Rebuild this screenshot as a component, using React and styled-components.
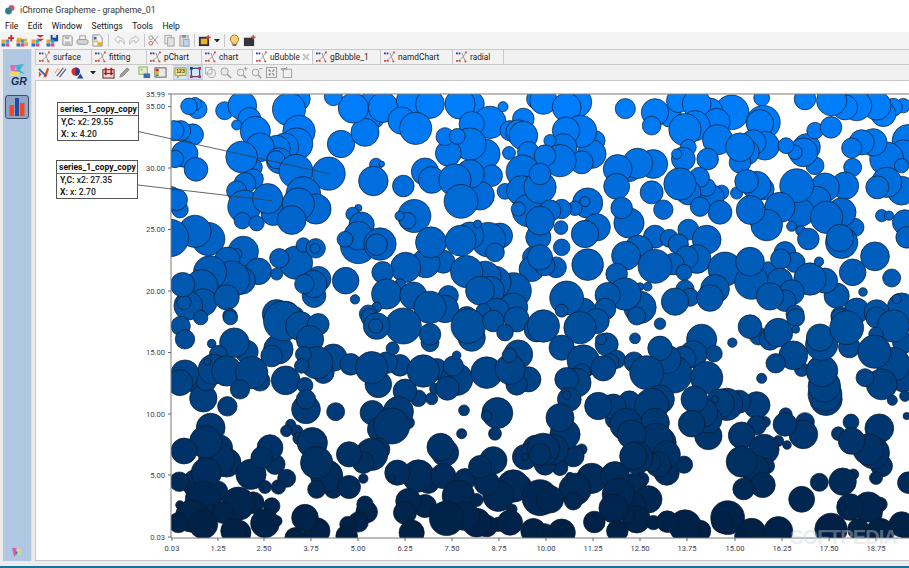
import React from "react";
import styled, { createGlobalStyle } from "styled-components";

const Global = createGlobalStyle`
  html, body { margin: 0; padding: 0; width: 909px; height: 568px; overflow: hidden; background: #fff; }
  * { box-sizing: border-box; }
`;

const FONT = `Roboto, "Noto Sans", "Liberation Sans", sans-serif`;

const Page = styled.div`
  width: 909px; height: 568px; display: flex; flex-direction: column;
  background: #f0f0f0; font-family: ${FONT}; font-size: 8.5px; color: #222; overflow: hidden;
`;
const TitleBar = styled.div`
  height: 18px; flex: none; background: #fff; display: flex; align-items: center; padding: 2px 0 0 5px; gap: 5px;
`;
const TitleText = styled.span` font-size: 8.8px; color: #333; `;
const MenuBar = styled.div`
  height: 14px; flex: none; background: #fff; display: flex; align-items: center; padding: 1px 0 0 5px; gap: 9.5px;
`;
const MenuItem = styled.span` font-size: 8.5px; color: #111; `;
const MainToolbar = styled.div`
  height: 17px; flex: none; display: flex; align-items: center; background: #f4f4f4;
`;
const ToolBtn = styled.div`
  flex: none; width: ${p => p.$w || 15}px; height: 15px; display: flex; align-items: center; justify-content: center;
  margin-right: ${p => p.$mr || 0}px;
  background: ${p => (p.$on ? "#d4e7f7" : "transparent")};
  outline: ${p => (p.$on ? "1px solid #b4d3ec" : "none")};
  outline-offset: -1px;
`;
const Sep = styled.div`
  flex: none; width: 1px; height: 13px; background: #c8c8c8; margin: 0 ${p => p.$m || 2}px;
`;
const Workspace = styled.div`
  flex: 1; display: flex; min-height: 0; padding: 0 0 5px 3px; background: #ececec;
`;
const SideRail = styled.div`
  width: 29px; flex: none; background: #b0c8e2; border-right: 1px solid #d7e1ec; display: flex; flex-direction: column; align-items: center;
  padding-top: 14px; margin-right: 3px;
`;
const RailLogo = styled.div`
  width: 22px; height: 24px; position: relative; display: flex; align-items: flex-end; justify-content: center;
`;
const RailLogoText = styled.span`
  position: absolute; bottom: 0; left: 5px; font: italic 700 10.5px "Liberation Sans", sans-serif; color: #1c2c5c;
`;
const RailButton = styled.div`
  margin-top: 8px; width: 24px; height: 24px; border: 1px solid #3f4e66; border-radius: 3px; background: #8ea6c4;
  display: flex; align-items: center; justify-content: center;
`;
const RailFoot = styled.div` margin-top: auto; margin-bottom: 3px; height: 10px; `;
const Content = styled.div`
  flex: 1; min-width: 0; display: flex; flex-direction: column;
`;
const TabStrip = styled.div`
  height: 16px; flex: none; display: flex; background: #f0f0f0; border-top: 1px solid #c8c8c8; border-bottom: 1px solid #c8c8c8;
`;
const Tab = styled.div`
  flex: none; width: ${p => p.$w}px; display: flex; align-items: center; gap: 2px; padding-left: 2px;
  background: ${p => (p.$active ? "#fff" : "#f2f2f2")}; border-left: 1px solid #c9c9c9; border-right: 1px solid #c9c9c9;
  margin-right: -1px;
`;
const TabLabel = styled.span` font-size: 8.3px; color: #222; white-space: nowrap; `;
const TabClose = styled.span` margin-left: auto; margin-right: 2px; display: flex; `;
const ChartToolbar = styled.div`
  height: 16px; flex: none; display: flex; align-items: center; padding-left: 1px; background: #f0f0f0; border-bottom: 1px solid #c8c8c8;
`;
const ChartPane = styled.div`
  flex: 1; position: relative; min-height: 0; background: #fff; border-left: 1px solid #c6c6c6; border-bottom: 1px solid #c6c6c6; margin-left: 0; overflow: hidden;
`;
const ChartSvg = styled.svg` display: block; position: absolute; left: 0; top: 0; `;
const Callout = styled.div`
  position: absolute; left: ${p => p.$x}px; top: ${p => p.$y}px; width: 82px; height: 39px;
  background: #fff; border: 1px solid #555; display: flex; flex-direction: column;
`;
const CalloutHead = styled.div`
  height: 13px; flex: none; border-bottom: 1px solid #666; padding-left: 2px; font-size: 8.6px; font-weight: 700; line-height: 12px; color: #111; white-space: nowrap;
`;
const CalloutRow = styled.div`
  height: 11.5px; padding-left: 3px; font-size: 8.6px; font-weight: 500; line-height: 12px; color: #222; white-space: nowrap;
  & b { font-weight: 700; }
`;
const Watermark = styled.div`
  position: absolute; left: 754px; top: 447px; font: 700 20px/18px "Liberation Sans", sans-serif; letter-spacing: -0.8px;
  color: rgba(205,210,215,.42); white-space: nowrap; pointer-events: none;
`;
const BottomLine = styled.div` height: 2px; flex: none; background: #17749c; `;

/* ---------- icons ---------- */
const S = ({ children, size = 13 }) => (
  <svg width={size} height={size} viewBox="0 0 14 14" fill="none">{children}</svg>
);
const Dots = () => (
  <>
    <rect x="0.5" y="6" width="4" height="3.5" fill="#e8a030" />
    <rect x="0.5" y="10" width="4" height="3.5" fill="#2a73c4" />
    <rect x="5" y="10" width="4" height="3.5" fill="#d94a8c" />
    <rect x="5" y="6" width="4" height="3.5" fill="#35a0c8" />
  </>
);
const icons = {
  new: <><Dots /><path d="M11 1v7M7.5 4.5h7" stroke="#d8262c" strokeWidth="2" /></>,
  open: <><path d="M1 4h4l1 1h6v3H1z" fill="#f0b030" /><Dots /><rect x="9" y="9" width="4" height="4" fill="#f0a040" /></>,
  hier: <><path d="M6 1h8l-4 3zM6 5h8l-4 3z" fill="#d8262c" /><Dots /></>,
  save: <><path d="M5 1h8v7H5z" fill="#1c4aa0" /><rect x="7" y="1" width="4" height="3" fill="#d6e4f6" /><Dots /></>,
  saveg: <><path d="M2 2h9l1 1v9H2z" stroke="#8b8b8b" /><rect x="4" y="2.5" width="5" height="3" fill="#b5b5b5" /><rect x="4" y="8" width="6" height="4" fill="#bdbdbd" /></>,
  print: <><rect x="1" y="6" width="12" height="5" rx="2" fill="#d6d6d6" stroke="#8f8f8f" /><rect x="4" y="2" width="6" height="4" fill="#f4f4f4" stroke="#9b9b9b" /></>,
  prev: <><path d="M2 1h7l3 3v9H2z" fill="#f7f7f7" stroke="#8a8a8a" /><rect x="3" y="3" width="3" height="3" fill="#2a73c4" /><rect x="3" y="7" width="5" height="2" fill="#e8c030" /><rect x="7" y="9" width="5" height="4" fill="#d8b020" /></>,
  undo: <path d="M2 6l4-4 1 2c4 0 6 3 5 7-1-3-3-4-5-4l-1 3z" stroke="#b4b4b4" />,
  redo: <path d="M12 6L8 2 7 4C3 4 1 7 2 11c1-3 3-4 5-4l1 3z" stroke="#b4b4b4" />,
  cut: <><path d="M4 2l7 9M11 2L4 11" stroke="#9e9e9e" /><circle cx="3" cy="10" r="2" stroke="#d06060" /><circle cx="3" cy="4" r="2" stroke="#9e9e9e" /></>,
  copy: <><rect x="2" y="1.5" width="7" height="9" fill="#ececec" stroke="#a2a2a2" /><rect x="5" y="4" width="7" height="9" fill="#e2e2e2" stroke="#a2a2a2" /></>,
  paste: <><rect x="2" y="2" width="9" height="11" fill="#d8d8d8" stroke="#a0a0a0" /><rect x="4.5" y="1" width="4" height="3" fill="#8c8c8c" /><rect x="6" y="6" width="6" height="7" fill="#bcd4ee" stroke="#8daac8" /></>,
  box: <><rect x="1" y="3" width="11" height="10" fill="#2f3036" /><rect x="3" y="5" width="7" height="6" fill="#f0b21e" /><path d="M11 1v5M8.5 3.5h5" stroke="#d8402c" strokeWidth="1.4" /></>,
  bulb: <><path d="M7 1a4.5 4.5 0 0 1 2.5 8.2V11h-5V9.2A4.5 4.5 0 0 1 7 1z" fill="#f5d27a" stroke="#b5701c" /><rect x="5" y="11" width="4" height="2" fill="#6c6c70" /></>,
  cam: <><rect x="1" y="4" width="11" height="9" fill="#34353b" /><path d="M11 1v5M8.5 3.5h5" stroke="#d8402c" strokeWidth="1.4" /></>,
  pencils: <><path d="M2 12V6l3 3zM7 12L11 2l2 1-3 9z" fill="#d8552a" /><path d="M2 3l8 8" stroke="#2f66b8" strokeWidth="2" /></>,
  wand: <><path d="M3 11L10 2M6 12l7-9" stroke="#5c5c8c" strokeWidth="1.3" /><path d="M1 8l3-5 2 1" stroke="#e0a030" /></>,
  series: <><circle cx="5" cy="6" r="4.5" fill="#d92828" /><path d="M5 1.5a4.5 4.5 0 0 1 0 9z" fill="#1c3c9c" /><path d="M10 8l3.5 5.5h-7z" fill="#1c4aa0" /></>,
  cal: <><rect x="1" y="4" width="12" height="9" fill="#f0d8d8" stroke="#4a2020" /><path d="M4 2v8M10 2v8" stroke="#c81818" strokeWidth="2" /><path d="M2 8h10" stroke="#701818" /></>,
  pen: <><path d="M2 12l1-3 7-7 2 2-7 7z" fill="#9c9c9c" stroke="#888" /></>,
  data: <><rect x="1" y="1" width="9" height="8" fill="#dfe9d0" stroke="#8aa870" /><path d="M3 3h2v2H3z" fill="#e0b020" /><rect x="6" y="8" width="7" height="5" fill="#3c6cb4" /></>,
  heat: <><rect x="1" y="2" width="12" height="10" fill="#e8e8e8" stroke="#5c5c5c" /><rect x="2" y="3" width="3" height="3" fill="#d82020" /><rect x="2" y="6" width="3" height="3" fill="#e8b020" /><rect x="2" y="9" width="3" height="2" fill="#3ca030" /></>,
  label: <><path d="M1 2h12v8H6l-2 3v-3H1z" fill="#f2e58a" stroke="#a09030" /><text x="7" y="8" textAnchor="middle" fontSize="5.5" fontWeight="700" fill="#444" fontFamily="Liberation Sans">123</text></>,
  zoomSel: <><rect x="2.5" y="2.5" width="9" height="9" stroke="#1c3c7c" strokeWidth="1.2" /><rect x="1" y="10" width="3" height="3" fill="#d83030" /><rect x="10" y="1" width="3" height="3" fill="#d83030" /><rect x="10" y="10" width="3" height="3" fill="#d83030" /><rect x="1" y="1" width="3" height="3" fill="#1c3c7c" /></>,
  rot: <><rect x="1.5" y="1.5" width="7" height="7" stroke="#a8a8a8" /><circle cx="8" cy="8" r="4.5" stroke="#a8a8a8" /></>,
  zoom: <><circle cx="6" cy="6" r="4" fill="#e8e8e8" stroke="#9a9a9a" /><path d="M9 9l4 4" stroke="#9a9a9a" strokeWidth="1.6" /></>,
  zoomIn: <><circle cx="6" cy="7" r="3.6" stroke="#9a9a9a" /><path d="M9 10l3 3" stroke="#9a9a9a" strokeWidth="1.6" /><path d="M11.5 1v4M9.5 3h4" stroke="#9a9a9a" /></>,
  zoomOut: <><circle cx="6" cy="7" r="3.6" stroke="#9a9a9a" /><path d="M9 10l3 3" stroke="#9a9a9a" strokeWidth="1.6" /><path d="M9.5 3h4" stroke="#9a9a9a" /></>,
  fit: <><rect x="1.5" y="1.5" width="11" height="11" fill="#ececec" stroke="#9a9a9a" /><path d="M4 4l2 2M10 4L8 6M4 10l2-2M10 10L8 8" stroke="#777" strokeWidth="1.2" /></>,
  reset: <><rect x="3.5" y="3.5" width="9" height="9" stroke="#a0a0a0" /><path d="M1 3h6V1M1 3l2 2" stroke="#8c8c8c" /></>,
};
const Icon = ({ name }) => <S>{icons[name]}</S>;
const Drop = () => (
  <svg width="6" height="3.5" viewBox="0 0 7 4"><path d="M0 0h7L3.5 4z" fill="#222" /></svg>
);
const TabGlyph = () => (
  <svg width="13" height="12" viewBox="0 0 13 12" fill="none">
    <path d="M3 10l5-4 3-5" stroke="#a9a9a9" strokeWidth="1" />
    <path d="M7 2l3 8" stroke="#9a9a9a" strokeWidth="1" />
    <rect x="1" y="1.5" width="1.8" height="1.8" fill="#2c3f96" /><rect x="3.6" y="1.5" width="1.8" height="1.8" fill="#2c3f96" />
    <rect x="1" y="9" width="1.8" height="1.8" fill="#df4a2c" /><rect x="3.8" y="9" width="1.8" height="1.8" fill="#df4a2c" />
    <rect x="10" y="0.5" width="1.8" height="1.8" fill="#df4a2c" /><rect x="9.5" y="9.5" width="1.8" height="1.8" fill="#df4a2c" />
  </svg>
);
const CloseGlyph = () => (
  <svg width="8" height="8" viewBox="0 0 8 8" fill="none"><path d="M1 1l6 6M7 1L1 7" stroke="#9c9c9c" strokeWidth="1.6" /><path d="M1 1l6 6M7 1L1 7" stroke="#fff" strokeWidth=".5" /></svg>
);

/* ---------- bubble data: [x, y, r] per 3x quadrant crop ---------- */
const Q1 = [[82,45,27],[75,30,18],[57,37,23],[164,50,25],[217,35,40],[238,75,32],[200,93,14],[256,112,42],[385,15,33],[357,46,46],[387,112,45],[380,150,45],[345,158,38],[320,165,38],[270,160,40],[250,220,25],[215,189,44],[328,200,36],[318,197,25],[378,232,47],[476,239,46],[68,122,30],[32,110,28],[12,110,28],[44,180,37],[15,195,24],[78,226,33],[250,255,28],[225,268,30],[200,291,28],[223,338,46],[310,358,34],[293,314,42],[400,300,48],[438,345,42],[385,330,45],[365,378,40],[217,380,23],[260,388,21],[0,315,35],[30,347,23],[20,317,30],[513,150,38],[595,30,30],[615,75,25],[600,80,28],[640,40,42],[585,115,39],[550,42,42],[720,20,38],[780,30,40],[695,80,38],[737,103,45],[905,30,35],[870,30,42],[960,85,45],[905,90,35],[945,180,42],[900,150,45],[835,178,36],[825,128,25],[862,127,22],[999,38,14],[1017,177,18],[1060,75,30],[1020,110,28],[1045,115,35],[1060,125,40],[1100,15,28],[1075,175,30],[618,212,18],[635,210,8],[610,261,41],[700,276,30],[765,233,38],[785,258,37],[965,245,30],[930,305,40],[900,240,40],[855,258,45],[873,322,47],[1005,292,22],[1100,300,25],[1058,233,46],[1055,290,42],[1075,350,45],[1045,345,20],[565,342,10],[548,360,19],[733,366,46],[713,380,23],[689,366,13],[575,392,35],[565,455,50],[565,425,40],[525,436,22],[630,450,45],[620,452,30],[115,435,46],[75,412,45],[0,432,52],[220,472,42],[200,480,15],[172,497,35],[265,532,37],[215,560,38],[185,555,50],[120,535,46],[95,575,45],[100,625,38],[55,635,40],[42,625,20],[38,572,34],[170,610,35],[320,540,17],[378,506,46],[328,493,27],[400,453,20],[437,463,27],[435,463,14],[445,555,35],[432,605,33],[430,570,38],[403,570,27],[527,560,37],[555,616,13],[820,503,32],[767,508,40],[707,520,42],[638,535,30],[783,445,43],[990,425,35],[955,437,48],[900,425,38],[872,440,43],[923,390,11],[975,475,26],[1105,430,35],[1090,490,30],[1085,525,35],[1030,590,50],[975,565,45],[945,550,45],[890,533,45],[960,590,40],[930,590,40],[690,570,15],[650,600,42],[730,605,38],[835,605,28],[825,645,38],[780,640,45],[620,640,14],[595,660,25],[690,690,35],[890,670,30],[1030,640,40],[980,650,35],[940,650,20],[375,665,25],[350,660,35],[320,660,40],[180,665,20],[490,8,25]];
const Q2 = [[10,20,38],[110,25,42],[80,40,40],[165,140,28],[155,180,40],[122,112,45],[125,205,32],[78,110,38],[70,160,38],[60,200,45],[30,140,17],[15,185,30],[0,280,45],[0,240,30],[256,44,28],[390,65,32],[345,55,38],[335,95,26],[415,20,33],[575,55,48],[510,50,35],[470,30,40],[530,83,37],[465,95,42],[435,107,45],[665,12,22],[795,15,30],[670,85,47],[660,88,38],[675,155,40],[640,145,35],[533,137,42],[620,175,35],[600,205,30],[600,160,40],[445,160,22],[430,195,33],[410,180,14],[503,195,30],[825,215,25],[800,160,38],[790,175,40],[765,175,20],[738,155,22],[825,110,23],[873,100,30],[1090,35,20],[1060,40,25],[1030,60,35],[1010,35,40],[950,35,42],[915,40,35],[875,20,42],[1105,140,45],[1090,175,35],[1040,195,47],[1085,215,20],[1000,145,38],[965,145,35],[935,162,28],[938,220,25],[340,210,40],[270,230,30],[293,208,42],[233,225,40],[230,277,36],[335,295,32],[370,347,27],[267,387,42],[245,342,30],[545,295,20],[515,310,35],[540,355,33],[500,280,25],[478,250,28],[445,295,35],[420,270,45],[480,338,27],[590,297,17],[670,285,30],[650,275,40],[620,262,33],[915,275,38],[855,280,40],[830,320,40],[780,355,40],[770,275,47],[720,340,42],[680,393,44],[632,348,40],[945,400,25],[905,355,40],[860,370,45],[755,397,14],[782,410,14],[805,435,30],[905,445,45],[900,432,38],[1085,290,40],[1040,265,42],[1012,280,32],[1025,365,17],[1047,365,13],[1095,385,35],[1100,430,30],[143,327,42],[135,323,14],[105,343,20],[65,345,27],[30,350,30],[0,380,40],[63,401,19],[65,460,23],[170,400,38],[135,420,38],[345,428,32],[388,433,25],[445,407,29],[500,437,40],[415,450,28],[143,512,44],[295,467,40],[258,485,40],[470,495,40],[440,490,32],[400,510,30],[345,517,47],[432,535,22],[230,540,30],[48,520,29],[15,515,28],[0,490,35],[685,530,25],[555,525,47],[635,565,47],[630,503,40],[735,475,30],[765,505,28],[722,495,28],[890,605,35],[855,560,35],[810,555,45],[720,560,35],[755,595,35],[735,620,30],[690,607,38],[1005,487,40],[938,535,37],[1055,552,25],[837,503,13],[969,594,12],[435,585,25],[450,610,25],[405,623,38],[525,585,40],[510,612,37],[300,578,11],[323,578,12],[300,640,45],[255,600,45],[203,603,35],[195,645,30],[130,650,35],[80,612,47],[65,650,18],[1085,640,40],[1070,615,13],[950,650,35],[1010,655,35],[765,660,25],[900,665,25]];
const Q3 = [[92,5,20],[32,30,27],[45,70,27],[181,5,20],[125,83,12],[230,107,32],[193,80,41],[325,100,41],[305,120,30],[340,15,55],[390,30,40],[445,25,30],[420,70,38],[490,125,38],[460,170,30],[440,140,45],[400,115,22],[395,150,20],[347,193,40],[405,208,22],[408,280,40],[408,250,27],[497,287,25],[542,145,30],[625,205,37],[690,148,30],[650,140,30],[605,155,45],[745,247,23],[705,225,33],[785,248,17],[795,218,15],[800,160,30],[760,165,45],[860,190,45],[832,217,33],[850,150,28],[860,118,12],[950,170,44],[1075,190,35],[1040,205,30],[1045,115,40],[1020,160,42],[1018,118,20],[600,5,25],[780,80,25],[780,55,30],[700,30,50],[620,30,37],[617,30,20],[668,97,18],[905,65,38],[895,30,48],[970,15,30],[1040,10,35],[1005,50,23],[1100,40,35],[85,205,30],[45,175,40],[30,200,36],[100,247,38],[110,195,28],[145,115,25],[130,160,42],[170,165,42],[112,137,10],[270,195,28],[245,170,45],[210,220,27],[172,271,27],[607,290,34],[715,320,17],[685,287,42],[630,340,35],[665,330,50],[982,291,43],[950,300,15],[882,283,15],[875,353,14],[975,353,18],[122,335,40],[150,395,35],[170,440,40],[140,430,50],[107,378,45],[42,405,36],[143,525,28],[80,503,40],[109,470,42],[28,497,27],[100,550,50],[243,475,42],[315,445,28],[300,395,36],[275,425,30],[350,487,25],[325,513,20],[285,513,18],[362,325,14],[380,345,17],[349,345,16],[388,367,18],[427,380,42],[490,520,25],[470,480,45],[440,440,45],[440,520,25],[537,513,32],[625,400,32],[605,415,45],[580,440,30],[537,415,35],[580,488,13],[775,500,30],[745,480,45],[682,470,35],[665,488,10],[825,410,38],[812,393,38],[820,480,35],[885,490,30],[865,540,45],[920,552,18],[1050,510,32],[1030,510,45],[985,540,43],[950,500,35],[970,433,38],[930,453,32],[1100,400,40],[1065,423,35],[1065,423,10],[1100,535,15],[30,567,12],[305,570,23],[250,560,30],[205,563,46],[125,580,15],[160,590,30],[65,600,45],[100,625,40],[25,620,28],[205,650,35],[190,645,35],[320,615,15],[285,622,40],[440,645,37],[405,605,37],[375,665,28],[590,588,30],[585,565,23],[565,618,28],[533,625,22],[530,660,30],[765,570,32],[715,555,35],[705,590,32],[725,650,35],[985,625,20],[950,630,30],[920,620,40],[885,600,40],[830,607,48],[1025,580,15],[1020,620,35],[1090,645,35]];
const Q4 = [[0,55,20],[170,15,35],[120,35,45],[10,30,45],[100,105,14],[65,95,35],[200,85,32],[183,70,15],[285,67,15],[360,23,16],[290,0,25],[230,130,25],[210,140,25],[130,135,45],[190,157,35],[282,138,28],[485,70,42],[522,113,23],[460,115,38],[430,128,35],[400,175,52],[380,130,40],[360,97,34],[320,170,47],[577,80,13],[500,185,45],[655,60,25],[690,70,30],[715,50,40],[630,32,33],[767,5,25],[767,40,11],[785,160,20],[760,118,40],[707,142,27],[665,187,14],[858,250,45],[855,235,47],[853,210,45],[846,165,44],[845,85,45],[840,65,38],[928,93,30],[900,5,25],[920,35,47],[1010,5,30],[1090,80,30],[1060,30,45],[1008,55,20],[1090,190,35],[1060,145,47],[1003,107,46],[1025,205,43],[975,185,25],[1095,240,15],[1057,253,14],[1100,300,10],[125,170,25],[110,200,40],[80,190,33],[88,250,33],[80,237,12],[268,257,30],[225,310,27],[220,272,35],[175,270,38],[360,250,40],[335,268,47],[345,320,40],[360,380,45],[350,370,45],[258,325,45],[275,355,40],[432,446,24],[380,470,35],[380,415,38],[355,445,35],[335,440,25],[290,425,45],[280,420,38],[650,267,37],[597,257,32],[560,265,45],[540,262,40],[505,360,38],[505,310,38],[490,290,40],[463,250,37],[525,250,10],[455,323,37],[125,400,15],[100,420,30],[75,355,42],[60,305,39],[60,455,22],[15,445,30],[40,400,42],[10,400,45],[0,415,30],[675,318,15],[650,328,27],[605,358,37],[715,375,15],[672,400,42],[680,450,22],[645,460,40],[605,437,43],[668,507,35],[611,519,30],[737,295,18],[795,318,26],[790,355,40],[735,325,33],[741,387,12],[933,318,22],[895,353,19],[1025,450,30],[1018,337,40],[1000,410,45],[985,400,43],[935,375,37],[1008,486,18],[1105,500,30],[838,499,25],[940,475,15],[908,497,38],[785,550,36],[1020,565,20],[1005,595,20],[985,573,42],[930,573,37],[908,573,11],[90,482,12],[155,487,42],[105,520,45],[100,555,25],[0,545,50],[30,550,38],[305,490,20],[280,510,35],[225,480,40],[325,550,38],[275,570,40],[290,610,38],[262,600,20],[235,535,45],[220,577,40],[163,618,30],[152,612,15],[232,645,30],[340,620,20],[480,645,30],[435,630,45],[382,617,30],[563,605,47],[547,618,30],[635,650,40],[600,660,15],[715,645,40],[873,640,45],[955,640,30],[1020,650,40],[1105,640,30],[1085,625,35],[65,650,38],[65,640,12],[15,650,25]];

const quads = [
  { ox: 170, oy: 94, d: Q1 }, { ox: 540, oy: 94, d: Q2 },
  { ox: 170, oy: 316, d: Q3 }, { ox: 540, oy: 316, d: Q4 },
];
const stops = [[94,[0,128,255]],[200,[0,106,214]],[316,[0,82,162]],[430,[0,54,111]],[537,[0,31,66]]];
const colorAt = y => {
  for (let i = 1; i < stops.length; i++) {
    if (y <= stops[i][0]) {
      const [y0, c0] = stops[i - 1], [y1, c1] = stops[i];
      const t = Math.max(0, (y - y0) / (y1 - y0));
      return `rgb(${c0.map((v, k) => Math.round(v + (c1[k] - v) * t)).join(",")})`;
    }
  }
  return "rgb(0,31,66)";
};
const bubbles = quads.flatMap(q => q.d.map(([x, y, r]) => ({ x: q.ox + x / 3, y: q.oy + y / 3, r: (r / 3) * 1.08 })));

/* chart pane origin in page coordinates */
const PX = 36, PY = 81;
const xTicks = [["0.03",172],["1.25",218],["2.50",264],["3.75",311],["5.00",358],["6.25",405],["7.50",452],["8.75",499],["10.00",546],["11.25",593],["12.50",640],["13.75",687],["15.00",735],["16.25",782],["17.50",829],["18.75",876]];
const yTicks = [["35.99",94],["35.00",106.5],["30.00",168],["25.00",229.5],["20.00",291],["15.00",352.5],["10.00",414],["5.00",475],["0.03",537]];

const Chart = () => (
  <ChartSvg width="873" height="481" viewBox={`${PX} ${PY} 873 481`}>
    <defs><clipPath id="plot"><rect x="171" y="94" width="740" height="444" /></clipPath></defs>
    <g clipPath="url(#plot)">
      {bubbles.map((b, i) => (
        <circle key={i} cx={b.x} cy={b.y} r={b.r} fill={colorAt(b.y)} stroke="#0b1a2c" strokeWidth="0.7" />
      ))}
    </g>
    <path d="M171 94H909M171 94V538H909" stroke="#7b7b7b" strokeWidth="1" fill="none" />
    <path d="M139 131.7L329 173.7M138 185L272 200.7" stroke="#3a4048" strokeWidth="0.8" />
    <g fontFamily={FONT} fontSize="7.6" fill="#444050">
      {yTicks.map(([t, y]) => (
        <g key={t}>
          <path d={`M168 ${y}H171`} stroke="#666" />
          <text x="165" y={y + 2.5} textAnchor="end">{t}</text>
        </g>
      ))}
      {xTicks.map(([t, x]) => (
        <g key={t}>
          <path d={`M${x} 538V541`} stroke="#666" />
          <text x={x} y="551" textAnchor="middle">{t}</text>
        </g>
      ))}
    </g>
  </ChartSvg>
);

const topTools = [
  ["new"],["open"],["hier"],["save"],["saveg"],["print"],["prev"],"sepw",
  ["undo"],["redo"],"sep",["cut"],["copy"],["paste"],"sep",["box"],"drop","sep",["bulb"],["cam"],
];
const tabs = [["surface",57],["fitting",56],["pChart",56],["chart",52],["uBubble",61,true],["gBubble_1",69],["namdChart",73],["radial",52]];

export default function App() {
  return (
    <Page>
      <Global />
      <TitleBar>
        <svg width="10" height="10" viewBox="0 0 10 10"><circle cx="6.5" cy="3" r="3" fill="#d8566c" /><circle cx="3.5" cy="6" r="3.4" fill="#2c7f92" /></svg>
        <TitleText>iChrome Grapheme - grapheme_01</TitleText>
      </TitleBar>
      <MenuBar>
        {["File","Edit","Window","Settings","Tools","Help"].map(m => <MenuItem key={m}>{m}</MenuItem>)}
      </MenuBar>
      <MainToolbar>
        {topTools.map((t, i) =>
          t === "sep" ? <Sep key={i} /> : t === "sepw" ? <Sep key={i} $m={3} /> : t === "drop" ? <ToolBtn key={i} $w={10}><Drop /></ToolBtn> : <ToolBtn key={i}><Icon name={t[0]} /></ToolBtn>
        )}
      </MainToolbar>
      <Workspace>
        <SideRail>
          <RailLogo>
            <svg width="22" height="20" viewBox="0 0 22 20" style={{ position: "absolute", top: 0, left: 0 }}>
              <path d="M4 2h7l-3 5 6-1-7 8z" fill="#e06ab4" /><path d="M10 2l8-1-4 6 5 4-8-2z" fill="#3ab4d4" /><path d="M5 8l9 1-2 4H3z" fill="#f0d868" />
            </svg>
            <RailLogoText>GR</RailLogoText>
          </RailLogo>
          <RailButton>
            <svg width="20" height="20" viewBox="0 0 20 20"><rect x="2.5" y="8" width="4.5" height="11" fill="#ef4a23" /><rect x="8" y="1" width="4" height="18" fill="#2249a8" /><rect x="13" y="6" width="4.5" height="13" fill="#ef4a23" /></svg>
          </RailButton>
          <RailFoot>
            <svg width="11" height="9" viewBox="0 0 11 9"><path d="M0 0h5l-2 4 4-1-5 6z" fill="#d860a8" /><path d="M5 0l5 2-4 2 4 3-5-1z" fill="#f0d868" /><path d="M3 3l3 1-2 3z" fill="#2a80b0" /></svg>
          </RailFoot>
        </SideRail>
        <Content>
          <TabStrip>
            {tabs.map(([name, w, active]) => (
              <Tab key={name} $w={w} $active={active}>
                <TabGlyph /><TabLabel>{name}</TabLabel>
                {active && <TabClose><CloseGlyph /></TabClose>}
              </Tab>
            ))}
          </TabStrip>
          <ChartToolbar>
            <ToolBtn $mr={2}><Icon name="pencils" /></ToolBtn>
            <ToolBtn $mr={2}><Icon name="wand" /></ToolBtn>
            <ToolBtn $mr={3}><Icon name="series" /></ToolBtn>
            <ToolBtn $w={9} $mr={4}><Drop /></ToolBtn>
            <ToolBtn $mr={1}><Icon name="cal" /></ToolBtn>
            <ToolBtn $mr={5}><Icon name="pen" /></ToolBtn>
            <ToolBtn $mr={1}><Icon name="data" /></ToolBtn>
            <ToolBtn $mr={5}><Icon name="heat" /></ToolBtn>
            <ToolBtn $on><Icon name="label" /></ToolBtn>
            <ToolBtn $on><Icon name="zoomSel" /></ToolBtn>
            <ToolBtn><Icon name="rot" /></ToolBtn>
            <ToolBtn $mr={1}><Icon name="zoom" /></ToolBtn>
            <ToolBtn><Icon name="zoomIn" /></ToolBtn>
            <ToolBtn><Icon name="zoomOut" /></ToolBtn>
            <ToolBtn><Icon name="fit" /></ToolBtn>
            <ToolBtn><Icon name="reset" /></ToolBtn>
          </ChartToolbar>
          <ChartPane>
            <Chart />
            <Callout $x={21} $y={21}>
              <CalloutHead>series_1_copy_copy</CalloutHead>
              <CalloutRow><b>Y,C:</b> x2: 29.55</CalloutRow>
              <CalloutRow><b>X:</b> x: 4.20</CalloutRow>
            </Callout>
            <Callout $x={20} $y={79}>
              <CalloutHead>series_1_copy_copy</CalloutHead>
              <CalloutRow><b>Y,C:</b> x2: 27.35</CalloutRow>
              <CalloutRow><b>X:</b> x: 2.70</CalloutRow>
            </Callout>
            <Watermark>SOFTPEDIA</Watermark>
          </ChartPane>
        </Content>
      </Workspace>
      <BottomLine />
    </Page>
  );
}
